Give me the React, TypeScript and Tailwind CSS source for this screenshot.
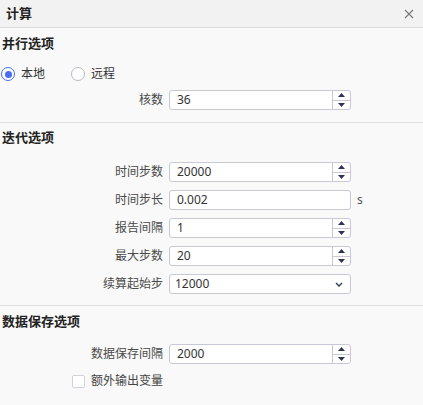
import React from "react";

/* Compute settings panel: parallel, iteration and data-saving options. */

const FONT = { fontFamily: '"Noto Sans", "Noto Sans CJK SC", sans-serif' };

function Spinner() {
  return (
    <div className="flex w-[18px] flex-col border-l border-[#c8c8d6]">
      <button className="flex flex-1 items-center justify-center border-b border-[#c8c8d6]">
        <svg width="7" height="4" viewBox="0 0 7 4">
          <path d="M3.5 0 L7 4 L0 4 Z" fill="#2b3452" />
        </svg>
      </button>
      <button className="flex flex-1 items-center justify-center">
        <svg width="7" height="4" viewBox="0 0 7 4">
          <path d="M0 0 L7 0 L3.5 4 Z" fill="#2b3452" />
        </svg>
      </button>
    </div>
  );
}

function Field({
  label,
  value,
  kind = "spin",
  unit,
}: {
  label: string;
  value: string;
  kind?: "spin" | "plain" | "select";
  unit?: string;
}) {
  return (
    <div className="flex h-5 items-center">
      <span className="w-[163px] shrink-0 text-right text-[12px] text-[#4a4a4a]">{label}</span>
      <div className="ml-[6px] flex h-5 w-[182px] overflow-hidden rounded-[3px] border border-[#c8c8d6] bg-white">
        <span
          className={`flex flex-1 items-center text-[12px] text-[#333] ${kind === "select" ? "pl-[5px]" : "pl-[7px]"}`}
        >
          {value}
        </span>
        {kind === "spin" && <Spinner />}
        {kind === "select" && (
          <span className="flex w-[22px] items-center justify-center">
            <svg width="8" height="5" viewBox="0 0 8 5">
              <path d="M1 1 L4 4 L7 1" fill="none" stroke="#2b3452" strokeWidth="1.3" />
            </svg>
          </span>
        )}
      </div>
      {unit && <span className="ml-[6px] text-[12px] text-[#555]">{unit}</span>}
    </div>
  );
}

function Radio({ label, checked }: { label: string; checked?: boolean }) {
  return (
    <label className="flex items-center gap-[6px]">
      <span
        className={`flex h-[14px] w-[14px] items-center justify-center rounded-full border bg-white ${checked ? "border-[#4a6cf0]" : "border-[#b9b9c6]"}`}
      >
        {checked && <span className="h-[7px] w-[7px] rounded-full bg-[#4a6cf0]" />}
      </span>
      <span className="text-[12px] text-[#333]">{label}</span>
    </label>
  );
}

export default function App() {
  return (
    <div className="h-[405px] w-[423px] overflow-hidden bg-[#f9f9f9]" style={FONT}>
      {/* Title bar */}
      <div className="flex h-[28px] items-center justify-between border-b border-[#dcdcdc] bg-[#f2f2f2] pl-[6px] pr-[9px]">
        <span className="text-[13px] font-bold text-[#222]">计算</span>
        <svg width="10" height="10" viewBox="0 0 10 10">
          <path d="M1 1 L9 9 M9 1 L1 9" stroke="#777" strokeWidth="1.1" />
        </svg>
      </div>

      {/* 并行选项 */}
      <section className="border-b border-[#e0e0e0] pb-[12px] pt-[5px]">
        <h3 className="h-5 pl-[2px] text-[13px] font-bold leading-5 text-[#222]">并行选项</h3>
        <div className="mt-[11px] flex h-5 items-center gap-[26px] pl-[1px]">
          <Radio label="本地" checked />
          <Radio label="远程" />
        </div>
        <div className="mt-[6px]">
          <Field label="核数" value="36" />
        </div>
      </section>

      {/* 迭代选项 */}
      <section className="border-b border-[#e0e0e0] pb-[11px] pt-[4px]">
        <h3 className="h-5 pl-[2px] text-[13px] font-bold leading-5 text-[#222]">迭代选项</h3>
        <div className="mt-[15px] flex flex-col gap-2">
          <Field label="时间步数" value="20000" />
          <Field label="时间步长" value="0.002" kind="plain" unit="s" />
          <Field label="报告间隔" value="1" />
          <Field label="最大步数" value="20" />
          <Field label="续算起始步" value="12000" kind="select" />
        </div>
      </section>

      {/* 数据保存选项 */}
      <section className="pt-[5px]">
        <h3 className="h-5 pl-[2px] text-[13px] font-bold leading-5 text-[#222]">数据保存选项</h3>
        <div className="mt-[13px]">
          <Field label="数据保存间隔" value="2000" />
        </div>
        <label className="mt-[7px] flex h-5 items-center gap-[6px] pl-[72px]">
          <span className="h-[13px] w-[13px] rounded-[2px] border border-[#d2d2da] bg-white" />
          <span className="text-[12px] text-[#444]">额外输出变量</span>
        </label>
      </section>
    </div>
  );
}
